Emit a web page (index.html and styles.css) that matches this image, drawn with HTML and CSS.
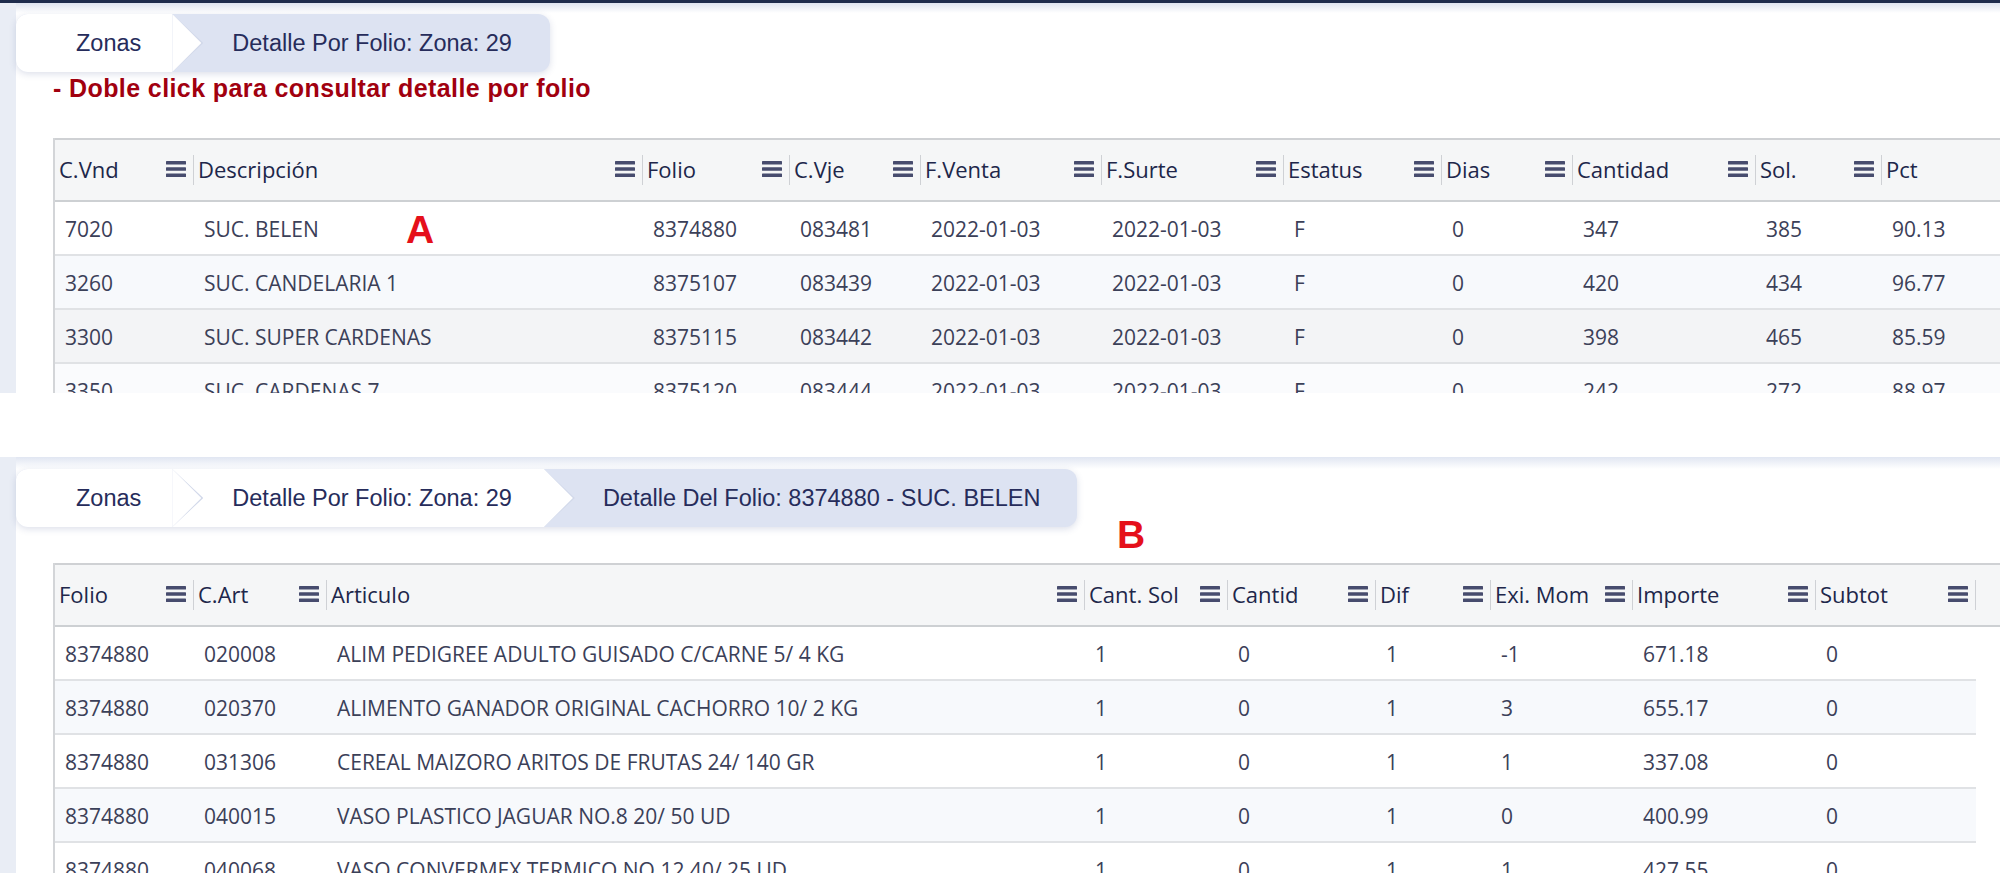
FILE: index.html
```html
<!DOCTYPE html>
<html lang="es">
<head>
<meta charset="utf-8">
<title>Detalle Por Folio</title>
<link rel="stylesheet" href="styles.css">
</head>
<body>
<svg class="defs" aria-hidden="true">
  <symbol id="menu" viewBox="0 0 20 16">
    <rect x="0" y="0" width="20" height="3.6" rx="0.6"/>
    <rect x="0" y="6.2" width="20" height="3.6" rx="0.6"/>
    <rect x="0" y="12.4" width="20" height="3.6" rx="0.6"/>
  </symbol>
</svg>

<section class="shot shot-a">
  <div class="topbar"></div>
  <div class="frame">
    <div class="rail"></div>
    <div class="main">
      <nav class="crumbs">
        <div class="crumb done">Zonas</div>
        <div class="crumb current">Detalle Por Folio: Zona: 29</div>
      </nav>
      <p class="hint">- Doble click para consultar detalle por folio</p>
      <div class="grid grid-a">
        <div class="ghead">
          <div class="hc"><span>C.Vnd</span><svg class="menu"><use href="#menu"/></svg></div>
          <div class="hc"><span>Descripción</span><svg class="menu"><use href="#menu"/></svg></div>
          <div class="hc"><span>Folio</span><svg class="menu"><use href="#menu"/></svg></div>
          <div class="hc"><span>C.Vje</span><svg class="menu"><use href="#menu"/></svg></div>
          <div class="hc"><span>F.Venta</span><svg class="menu"><use href="#menu"/></svg></div>
          <div class="hc"><span>F.Surte</span><svg class="menu"><use href="#menu"/></svg></div>
          <div class="hc"><span>Estatus</span><svg class="menu"><use href="#menu"/></svg></div>
          <div class="hc"><span>Dias</span><svg class="menu"><use href="#menu"/></svg></div>
          <div class="hc"><span>Cantidad</span><svg class="menu"><use href="#menu"/></svg></div>
          <div class="hc"><span>Sol.</span><svg class="menu"><use href="#menu"/></svg></div>
          <div class="hc"><span>Pct</span><svg class="menu"><use href="#menu"/></svg></div>
        </div>
        <div class="grow">
          <div class="dc">7020</div><div class="dc">SUC. BELEN</div><div class="dc">8374880</div><div class="dc">083481</div><div class="dc">2022-01-03</div><div class="dc">2022-01-03</div><div class="dc">F</div><div class="dc">0</div><div class="dc">347</div><div class="dc">385</div><div class="dc">90.13</div>
        </div>
        <div class="grow alt">
          <div class="dc">3260</div><div class="dc">SUC. CANDELARIA 1</div><div class="dc">8375107</div><div class="dc">083439</div><div class="dc">2022-01-03</div><div class="dc">2022-01-03</div><div class="dc">F</div><div class="dc">0</div><div class="dc">420</div><div class="dc">434</div><div class="dc">96.77</div>
        </div>
        <div class="grow hov">
          <div class="dc">3300</div><div class="dc">SUC. SUPER CARDENAS</div><div class="dc">8375115</div><div class="dc">083442</div><div class="dc">2022-01-03</div><div class="dc">2022-01-03</div><div class="dc">F</div><div class="dc">0</div><div class="dc">398</div><div class="dc">465</div><div class="dc">85.59</div>
        </div>
        <div class="grow light">
          <div class="dc">3350</div><div class="dc">SUC. CARDENAS 7</div><div class="dc">8375120</div><div class="dc">083444</div><div class="dc">2022-01-03</div><div class="dc">2022-01-03</div><div class="dc">F</div><div class="dc">0</div><div class="dc">242</div><div class="dc">272</div><div class="dc">88.97</div>
        </div>
      </div>
    </div>
  </div>
  <span class="mark mark-a">A</span>
</section>

<section class="shot shot-b">
  <div class="frame">
    <div class="rail"></div>
    <div class="main">
      <nav class="crumbs">
        <div class="crumb done">Zonas</div>
        <div class="crumb done mid">Detalle Por Folio: Zona: 29</div>
        <div class="crumb current last">Detalle Del Folio: 8374880 - SUC. BELEN</div>
      </nav>
      <div class="grid grid-b">
        <div class="ghead">
          <div class="hc"><span>Folio</span><svg class="menu"><use href="#menu"/></svg></div>
          <div class="hc"><span>C.Art</span><svg class="menu"><use href="#menu"/></svg></div>
          <div class="hc"><span>Articulo</span><svg class="menu"><use href="#menu"/></svg></div>
          <div class="hc"><span>Cant. Sol</span><svg class="menu"><use href="#menu"/></svg></div>
          <div class="hc"><span>Cantid</span><svg class="menu"><use href="#menu"/></svg></div>
          <div class="hc"><span>Dif</span><svg class="menu"><use href="#menu"/></svg></div>
          <div class="hc"><span>Exi. Mom</span><svg class="menu"><use href="#menu"/></svg></div>
          <div class="hc"><span>Importe</span><svg class="menu"><use href="#menu"/></svg></div>
          <div class="hc"><span>Subtot</span><svg class="menu"><use href="#menu"/></svg></div>
        </div>
        <div class="grow">
          <div class="dc">8374880</div><div class="dc">020008</div><div class="dc">ALIM PEDIGREE ADULTO GUISADO C/CARNE 5/ 4 KG</div><div class="dc">1</div><div class="dc">0</div><div class="dc">1</div><div class="dc">-1</div><div class="dc">671.18</div><div class="dc">0</div>
        </div>
        <div class="grow alt">
          <div class="dc">8374880</div><div class="dc">020370</div><div class="dc">ALIMENTO GANADOR ORIGINAL CACHORRO 10/ 2 KG</div><div class="dc">1</div><div class="dc">0</div><div class="dc">1</div><div class="dc">3</div><div class="dc">655.17</div><div class="dc">0</div>
        </div>
        <div class="grow">
          <div class="dc">8374880</div><div class="dc">031306</div><div class="dc">CEREAL MAIZORO ARITOS DE FRUTAS 24/ 140 GR</div><div class="dc">1</div><div class="dc">0</div><div class="dc">1</div><div class="dc">1</div><div class="dc">337.08</div><div class="dc">0</div>
        </div>
        <div class="grow alt">
          <div class="dc">8374880</div><div class="dc">040015</div><div class="dc">VASO PLASTICO JAGUAR NO.8 20/ 50 UD</div><div class="dc">1</div><div class="dc">0</div><div class="dc">1</div><div class="dc">0</div><div class="dc">400.99</div><div class="dc">0</div>
        </div>
        <div class="grow">
          <div class="dc">8374880</div><div class="dc">040068</div><div class="dc">VASO CONVERMEX TERMICO NO.12 40/ 25 UD</div><div class="dc">1</div><div class="dc">0</div><div class="dc">1</div><div class="dc">1</div><div class="dc">427.55</div><div class="dc">0</div>
        </div>
      </div>
    </div>
  </div>
  <span class="mark mark-b">B</span>
</section>
</body>
</html>
```

FILE: styles.css
```css
* { box-sizing: border-box; }

html, body {
  margin: 0;
  padding: 0;
  background: #ffffff;
}

body {
  width: 2000px;
  height: 891px;
  overflow: hidden;
  font-family: "Open Sans", "Segoe UI", sans-serif;
}

.defs {
  position: absolute;
  width: 0;
  height: 0;
  overflow: hidden;
}

.shot {
  position: relative;
  display: flex;
  flex-direction: column;
  overflow: hidden;
}

.shot-a { height: 393px; }

.shot-b {
  height: 416px;
  margin-top: 64px;
}

.topbar {
  flex: none;
  height: 3px;
  background: #1e2c4c;
}

.frame {
  flex: 1;
  display: flex;
  min-height: 0;
  background: linear-gradient(#dde3ef, #ffffff 10px);
}

.shot-b .frame {
  background: linear-gradient(#e1e6f2, #ffffff 12px);
}

.rail {
  flex: none;
  width: 16px;
  background: #e9edf5;
}

.main {
  flex: 1;
  min-width: 0;
  padding-top: 11px;
}

.shot-b .main { padding-top: 12px; }

/* breadcrumb */
.crumbs {
  display: flex;
  width: max-content;
  height: 58px;
  border-radius: 12px;
  background: #dde3f2;
  box-shadow: 0 2px 7px rgba(60, 80, 140, 0.18);
  overflow: hidden;
  font-family: "Liberation Sans", Arial, sans-serif;
  font-size: 23.5px;
  color: #262c5b;
}

.crumb {
  position: relative;
  display: flex;
  align-items: center;
  padding: 0 38px 0 60px;
  white-space: nowrap;
}

.crumb.done {
  background: #ffffff;
  padding-right: 31px;
}

.crumb.mid { padding-right: 32px; }

.crumb.last { padding: 0 37px 0 59px; }

.crumb.done::before,
.crumb.done::after {
  content: "";
  position: absolute;
  top: 0;
  left: 100%;
  height: 100%;
  clip-path: polygon(0 0, 100% 50%, 0 100%);
}

.crumb.done::before {
  width: 31px;
  background: #d2d9ea;
  z-index: 1;
}

.crumb.done::after {
  width: 29px;
  background: #ffffff;
  z-index: 2;
}

/* hint */
.hint {
  margin: 4px 0 0 37px;
  font: bold 25px/25px "Liberation Sans", Arial, sans-serif;
  letter-spacing: 0.4px;
  color: #a1000f;
}

/* grid */
.grid {
  margin: 37px 0 0 37px;
  border-left: 2px solid #d3d5d8;
}

.grid-b { margin-top: 36px; }

.grid-a {
  --cols: 139px 449px 147px 131px 181px 182px 158px 131px 183px 126px 160px;
}

.grid-b {
  --cols: 139px 133px 758px 143px 148px 115px 142px 183px 160px;
}

.ghead {
  display: grid;
  grid-template-columns: var(--cols);
  height: 64px;
  background: #f5f6f7;
  border-top: 2px solid #cfd1d4;
  border-bottom: 2px solid #cdd0d3;
}

.hc {
  position: relative;
  display: flex;
  align-items: center;
  justify-content: space-between;
  gap: 4px;
  padding: 0 8px 2px 4px;
  min-width: 0;
  white-space: nowrap;
  font-size: 22px;
  color: #20264a;
}

.hc::after {
  content: "";
  position: absolute;
  right: 0;
  top: 15px;
  bottom: 15px;
  width: 1px;
  background: #cfd1d5;
}

.menu {
  flex: none;
  width: 20px;
  height: 16px;
  fill: #474c6e;
}

.grow {
  display: grid;
  grid-template-columns: var(--cols);
  width: max-content;
  height: 54px;
  background: #ffffff;
  border-bottom: 2px solid #e0e2e5;
}

.grow.alt { background: #f7f9fc; }
.grow.hov { background: #f3f4f6; }
.grow.light { background: #fafbfd; }

.dc {
  display: flex;
  align-items: center;
  padding: 2px 0 0 10px;
  min-width: 0;
  overflow: hidden;
  white-space: nowrap;
  font-size: 21px;
  color: #3b4058;
}

/* annotation letters */
.mark {
  position: absolute;
  font: bold 39px/39px "Liberation Sans", Arial, sans-serif;
  color: #e5101b;
}

.mark-a { left: 406px; top: 210px; }
.mark-b { left: 1117px; top: 58px; }
```
